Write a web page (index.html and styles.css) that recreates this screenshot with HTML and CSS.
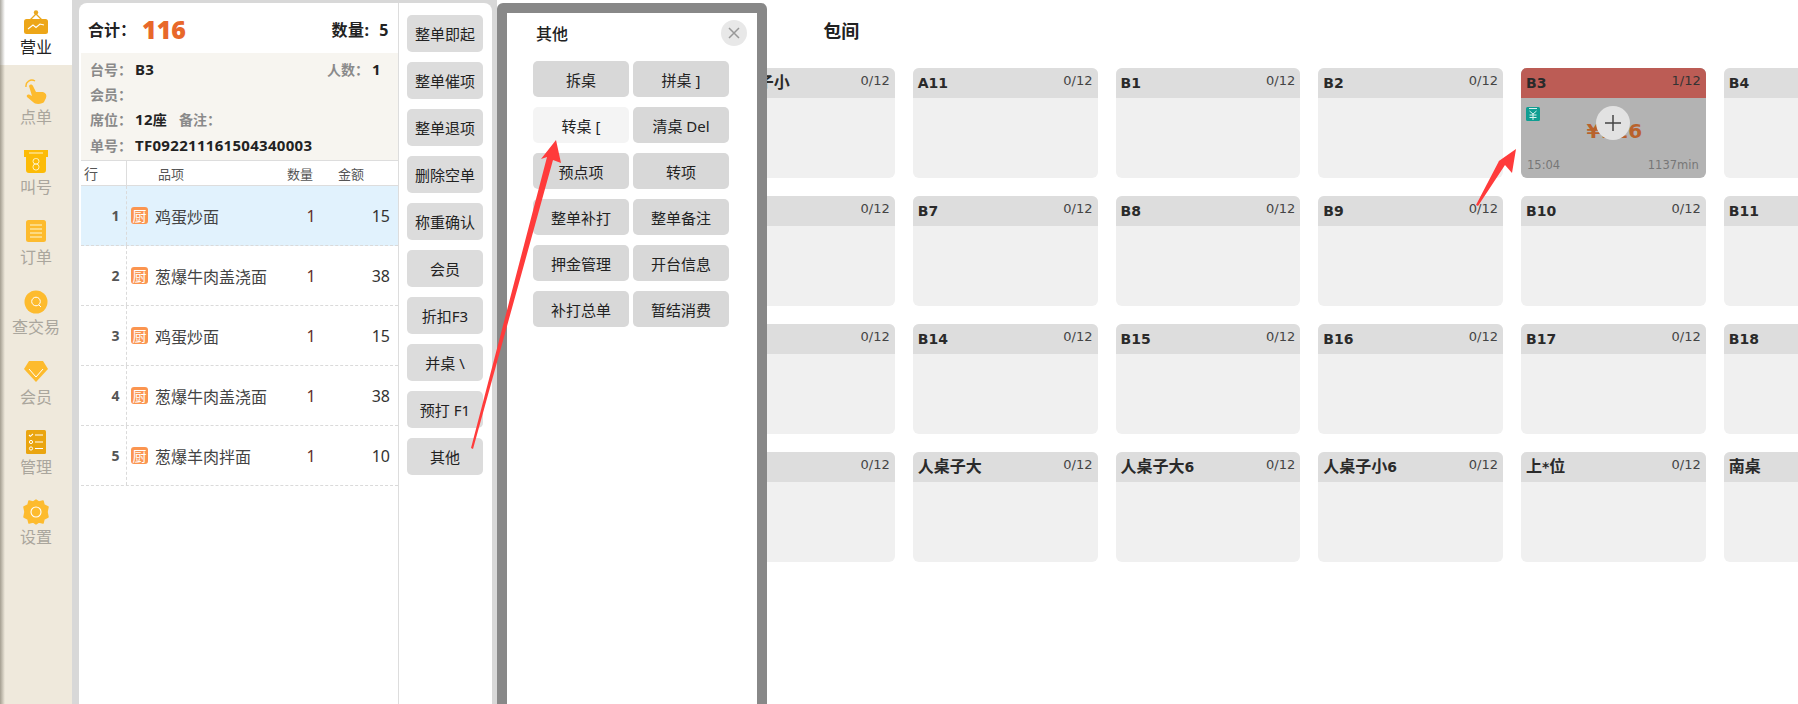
FILE: index.html
```html
<!DOCTYPE html>
<html lang="zh">
<head>
<meta charset="utf-8">
<title>营业</title>
<link rel="stylesheet" href="styles.css">
</head>
<body>
<div class="app">
  <nav class="rail">
    <a class="nav active"><svg class="ico" viewBox="0 0 26 26"><path d="M13 5 6 12M13 5l7 7" stroke="#e9a820" stroke-width="1.3" fill="none"/><circle cx="13" cy="3.5" r="2.2" fill="#e9a820"/><rect x="1" y="10" width="24" height="15" rx="2.5" fill="#eda618"/><path d="M5 20l5-4 3 2.5 4-3.5 4 1" stroke="#fff" fill="none" stroke-width="1.1"/></svg><span>营业</span></a>
    <a class="nav"><svg class="ico" viewBox="0 0 26 26"><path d="M3 8a6 6 0 0 1 9-6" stroke="#fdbb2e" stroke-width="1.4" fill="none"/><path d="M6 7c1-2 3-2 4 0l3 6 7 0c3 1 4 3 3 6l-2 4c-1 2-9 3-11 0l-6-5c-1-2 1-3 3-2l2 1z" fill="#fdbb2e"/></svg><span>点单</span></a>
    <a class="nav"><svg class="ico" viewBox="0 0 26 26"><path d="M1 1h24v7h-2v13a3 3 0 0 1-3 3H6a3 3 0 0 1-3-3V8H1z" fill="#fcbb07"/><path d="M6 4h14" stroke="#fff3c8" stroke-width="1"/><rect x="10" y="9.5" width="6" height="5.5" rx="2.7" fill="none" stroke="#fff3c8"/><rect x="10" y="15" width="6" height="6" rx="2.8" fill="none" stroke="#fff3c8"/></svg><span>叫号</span></a>
    <a class="nav"><svg class="ico" viewBox="0 0 26 26"><rect x="3" y="1" width="20" height="22" rx="2.5" fill="#fdbb2e"/><path d="M7 6h12M7 10h12M7 14h12M7 18h12" stroke="#fde39c" stroke-width="1.3"/></svg><span>订单</span></a>
    <a class="nav"><svg class="ico" viewBox="0 0 26 26"><circle cx="13" cy="13" r="11.5" fill="#fdbb2e"/><circle cx="13" cy="12.5" r="4.3" fill="none" stroke="#fff" stroke-width="1"/><path d="m16 16 2 2" stroke="#fff"/></svg><span>查交易</span></a>
    <a class="nav"><svg class="ico" viewBox="0 0 26 26"><path d="M6 2h14l5 8-12 13L1 10z" fill="#fdbb2e"/><path d="M6 10l7 8 7-8" stroke="#fff" fill="none"/></svg><span>会员</span></a>
    <a class="nav"><svg class="ico" viewBox="0 0 26 26"><rect x="3" y="1" width="20" height="24" rx="1.5" fill="#eaa510"/><path d="M6 6l1.3 1.3L10 5M12 6h8M12 13h8M12 19.500h8" stroke="#fff" fill="none" stroke-width="1.1"/><circle cx="8" cy="13" r="1.6" fill="none" stroke="#fff"/><circle cx="8" cy="19.500" r="1.6" fill="none" stroke="#fff"/></svg><span>管理</span></a>
    <a class="nav"><svg class="ico" viewBox="0 0 26 26"><path d="M13 1l3 2 4-1 1 4 4 2-1 5 1 5-4 2-1 4-4-1-3 2-3-2-4 1-1-4-4-2 1-5-1-5 4-2 1-4 4 1z" fill="#fdbb2e" stroke="#fdbb2e" stroke-linejoin="round" stroke-width="1.500"/><circle cx="13" cy="13" r="5" fill="none" stroke="#fff" stroke-width="1.100"/></svg><span>设置</span></a>
  </nav>

  <div class="order-wrap">
    <section class="order">
      <div class="ticket">
        <div class="total">
          <div class="total-sum">合计：<b>116</b></div>
          <div class="total-qty">数量:&nbsp; 5</div>
        </div>
        <div class="info">
          <div class="info-row"><span><i>台号：</i><b>B3</b></span><span class="people"><i>人数：</i><b>1</b></span></div>
          <div class="info-row"><span><i>会员：</i></span></div>
          <div class="info-row"><span><i>席位：</i><b>12<small>座</small></b><i class="note">备注：</i></span></div>
          <div class="info-row"><span><i>单号：</i><b>TF092211161504340003</b></span></div>
        </div>
        <div class="thead">
          <div class="c-no">行</div>
          <div class="c-name">品项</div>
          <div class="c-qty">数量</div>
          <div class="c-amt">金额</div>
        </div>
        <div class="row selected"><div class="c-no">1</div><div class="c-name"><em>厨</em>鸡蛋炒面</div><div class="c-qty">1</div><div class="c-amt">15</div></div>
        <div class="row"><div class="c-no">2</div><div class="c-name"><em>厨</em>葱爆牛肉盖浇面</div><div class="c-qty">1</div><div class="c-amt">38</div></div>
        <div class="row"><div class="c-no">3</div><div class="c-name"><em>厨</em>鸡蛋炒面</div><div class="c-qty">1</div><div class="c-amt">15</div></div>
        <div class="row"><div class="c-no">4</div><div class="c-name"><em>厨</em>葱爆牛肉盖浇面</div><div class="c-qty">1</div><div class="c-amt">38</div></div>
        <div class="row"><div class="c-no">5</div><div class="c-name"><em>厨</em>葱爆羊肉拌面</div><div class="c-qty">1</div><div class="c-amt">10</div></div>
      </div>
      <div class="actions">
        <button>整单即起</button><button>整单催项</button><button>整单退项</button><button>删除空单</button><button>称重确认</button><button>会员</button><button>折扣F3</button><button>并桌 \</button><button>预打 F1</button><button>其他</button>
      </div>
    </section>
  </div>

  <main class="floor">
    <h2 class="area">包间</h2>
    <div class="tables">
      <div class="card"><header></header></div>
      <div class="card"><header><b class="cjk"><u>A</u>人桌子小</b><span>0/12</span></header></div>
      <div class="card"><header><b>A11</b><span>0/12</span></header></div>
      <div class="card"><header><b>B1</b><span>0/12</span></header></div>
      <div class="card"><header><b>B2</b><span>0/12</span></header></div>
      <div class="card busy"><header><b>B3</b><span>1/12</span></header>
        <div class="card-body">
          <svg class="pay" viewBox="0 0 14 14"><rect width="14" height="14" rx="1.500" fill="#0f9e92"/><path d="M3 1.500h8M3.500 4l3.500 3 3.500-3M3.500 8h7M3.500 10.500h7M7 7v6" stroke="#d8f2ee" fill="none"/></svg>
          <div class="amount">¥116</div>
          <div class="plus"><svg viewBox="0 0 16 16"><path d="M8 0v16M0 8h16" stroke="#444" stroke-width="1.500"/></svg></div>
          <div class="meta"><span>15:04</span><span>1137min</span></div>
        </div>
      </div>
      <div class="card"><header><b>B4</b></header></div>
      <div class="card"><header></header></div>
      <div class="card"><header class="end"><span>0/12</span></header></div>
      <div class="card"><header><b>B7</b><span>0/12</span></header></div>
      <div class="card"><header><b>B8</b><span>0/12</span></header></div>
      <div class="card"><header><b>B9</b><span>0/12</span></header></div>
      <div class="card"><header><b>B10</b><span>0/12</span></header></div>
      <div class="card"><header><b>B11</b></header></div>
      <div class="card"><header></header></div>
      <div class="card"><header class="end"><span>0/12</span></header></div>
      <div class="card"><header><b>B14</b><span>0/12</span></header></div>
      <div class="card"><header><b>B15</b><span>0/12</span></header></div>
      <div class="card"><header><b>B16</b><span>0/12</span></header></div>
      <div class="card"><header><b>B17</b><span>0/12</span></header></div>
      <div class="card"><header><b>B18</b></header></div>
      <div class="card"><header></header></div>
      <div class="card"><header class="end"><span>0/12</span></header></div>
      <div class="card"><header><b class="cjk">人桌子大</b><span>0/12</span></header></div>
      <div class="card"><header><b class="cjk">人桌子大<u>6</u></b><span>0/12</span></header></div>
      <div class="card"><header><b class="cjk">人桌子小<u>6</u></b><span>0/12</span></header></div>
      <div class="card"><header><b class="cjk">上<u>*</u>位</b><span>0/12</span></header></div>
      <div class="card"><header><b class="cjk">南桌</b></header></div>
    </div>
  </main>

  <aside class="modal">
    <div class="modal-head"><h3>其他</h3><button class="close" aria-label="关闭"><svg viewBox="0 0 12 12"><path d="M1 1l10 10M11 1 1 11" stroke="#999" stroke-width="1.500"/></svg></button></div>
    <div class="modal-grid">
      <button>拆桌</button><button>拼桌 ]</button>
      <button class="hover">转桌 [</button><button>清桌 Del</button>
      <button>预点项</button><button>转项</button>
      <button>整单补打</button><button>整单备注</button>
      <button>押金管理</button><button>开台信息</button>
      <button>补打总单</button><button>暂结消费</button>
    </div>
  </aside>

  <svg class="arrows" viewBox="0 0 1798 704">
    <polygon points="556,140 561,163 553,160 473,449 471,448 547,157 541,159"/>
    <polygon points="1516,149 1512,173 1505,165 1478,206 1476,205 1499,161 1496,163"/>
  </svg>
</div>
</body>
</html>
```

FILE: styles.css
```css
* { box-sizing: border-box; }
html, body { margin: 0; height: 704px; overflow: hidden; background: #fff; }
body { font-family: "Noto Sans", "Noto Sans CJK SC", sans-serif; color: #222; }
.app { position: relative; display: flex; width: 1798px; height: 704px; overflow: hidden; }
button { font: inherit; border: 0; padding: 0; color: #222; }
i, em { font-style: normal; }
u { text-decoration: none; font-size: 14px; }

/* Left rail */
.rail { position: relative; flex: none; width: 72px; background: #efe9dc; }
.rail::before { content: ""; position: absolute; left: 0; top: 0; bottom: 0; width: 5px; z-index: 1;
  background: linear-gradient(90deg, rgba(90, 85, 70, .5), rgba(90, 85, 70, 0)); }
.nav { display: flex; flex-direction: column; align-items: center; height: 70px; padding-top: 9px; color: #aaa69d; font-size: 16px; line-height: 22px; }
.nav.active { height: 65px; margin-bottom: 5px; background: #fff; color: #222; }
.ico { display: block; width: 26px; height: 26px; margin-bottom: 1px; }

/* Order panel */
.order-wrap { flex: none; width: 425px; padding: 3px 5px 0 7px; background: #d8d8d8; }
.order { display: flex; height: 701px; background: #fff; border-radius: 8px 8px 0 0; padding-left: 2px; }
.ticket { flex: none; width: 318px; border-right: 1px solid #ddd; }
.total { display: flex; justify-content: space-between; align-items: center; height: 50px; padding: 2px 9px 0 7px; font-size: 16px; font-weight: 700; }
.total-sum { display: flex; align-items: center; }
.total-sum b { color: #e8682a; font-size: 25px; line-height: 30px; margin-left: 6px; }
.total-qty { letter-spacing: .6px; }
.info { height: 107px; padding: 4px 0 0 9px; background: #f7f5f0; font-size: 14px; line-height: 24.5px; }
.info-row { display: flex; justify-content: space-between; padding-right: 17px; }
.info i { color: #8a8a8a; font-weight: 700; }
.info b { margin-left: 3px; color: #222; font-size: 15px; letter-spacing: .3px; }
.info small { font-size: 14px; }
.info .note { margin-left: 12px; }
.thead, .row { display: flex; align-items: center; }
.thead { height: 26px; border-top: 1px solid #ddd; border-bottom: 1px solid #ddd; font-size: 13px; color: #555; }
.row { height: 60px; border-bottom: 1px dashed #dadada; font-size: 16px; color: #444; }
.row.selected { background: #e1f2fd; }
.c-no { align-self: stretch; display: flex; align-items: center; justify-content: center; width: 46px; border-right: 1px dashed #dadada; }
.thead .c-no { border-right: 1px solid #ddd; justify-content: flex-start; padding-left: 3px; font-size: 14px; }
.row .c-no { font-size: 14px; font-weight: 700; color: #555; padding-left: 24px; }
.c-name { display: flex; align-items: center; width: 157px; padding-left: 4px; }
.thead .c-name { padding-left: 31px; width: 146px; }
.c-name em { flex: none; width: 17px; height: 17px; margin-right: 7px; border-radius: 3px; background: #fb9550; color: #fff; font-size: 14px; line-height: 17px; text-align: center; }
.c-qty { width: 54px; text-align: center; color: #63302a; }
.thead .c-qty { color: #555; }
.c-amt { width: 60px; text-align: right; padding-right: 8px; color: #333; }
.thead .c-amt { width: 71px; color: #555; padding-right: 34px; }
.actions { display: flex; flex-direction: column; gap: 10px; padding: 12px 0 0 8px; }
.actions button { width: 76px; height: 37px; border-radius: 5px; background: #dcdcdc; font-size: 15px; }

/* Floor */
.floor { flex: 1; min-width: 0; padding-left: 10.25px; }
.area { margin: 0 0 0 316px; height: 68px; padding-top: 20px; font-size: 18px; line-height: 24px; font-weight: 700; font-family: "DejaVu Sans", "Noto Sans CJK SC", sans-serif; }
.tables { display: grid; grid-template-columns: repeat(7, 184.75px); grid-auto-rows: 110px; gap: 18px; font-family: "DejaVu Sans", "Noto Sans CJK SC", sans-serif; }
.card { display: flex; flex-direction: column; background: #f0f0f0; border-radius: 6px; overflow: hidden; }
.card header { flex: none; display: flex; justify-content: space-between; height: 30px; padding: 0 5px; background: #ddd; color: #2a2a2a; }
.card header.end { justify-content: flex-end; }
.card b { font-size: 14px; line-height: 30px; }
.card b.cjk { font-size: 16px; }
.card span { font-size: 13px; line-height: 26px; color: #444; }
.busy { background: #b3b3b3; }
.busy header { background: #bc5c55; }
.busy span { color: #333; }
.card-body { position: relative; flex: 1; }
.pay { position: absolute; left: 5px; top: 9px; width: 14px; height: 14px; }
.amount { position: absolute; left: 2px; right: 0; top: 19px; text-align: center; color: #b9622c; font-size: 20px; font-weight: 700; line-height: 28px; }
.plus { position: absolute; left: 75px; top: 8px; width: 34px; height: 34px; border-radius: 50%; background: #e2e2e2; display: flex; align-items: center; justify-content: center; }
.plus svg { display: block; width: 16px; height: 16px; }
.meta { position: absolute; left: 6px; right: 7px; bottom: 3px; display: flex; justify-content: space-between; }
.meta span { color: #777; font-size: 11.5px; line-height: 20px; }

/* Modal */
.modal { position: absolute; left: 497px; top: 3px; bottom: -40px; width: 270px; border: 10px solid #888; border-radius: 6px; background: #fff; }
.modal-head { display: flex; justify-content: space-between; align-items: center; height: 40px; padding: 0 10px 0 29px; }
.modal-head h3 { margin: 0; font-size: 16px; font-weight: 500; }
.close { width: 26px; height: 26px; border-radius: 50%; background: #e8e8e8; display: flex; align-items: center; justify-content: center; }
.close svg { width: 12px; height: 12px; }
.modal-grid { display: grid; grid-template-columns: 96px 96px; gap: 10px 4px; padding: 8px 0 0 26px; }
.modal-grid button { height: 36px; border-radius: 5px; background: #d8d8d8; font-size: 15px; }
.modal-grid .hover { background: #f4f4f4; }

/* Annotation arrows */
.arrows { position: absolute; inset: 0; width: 1798px; height: 704px; pointer-events: none; }
.arrows polygon { fill: #ff3b3b; }
```
